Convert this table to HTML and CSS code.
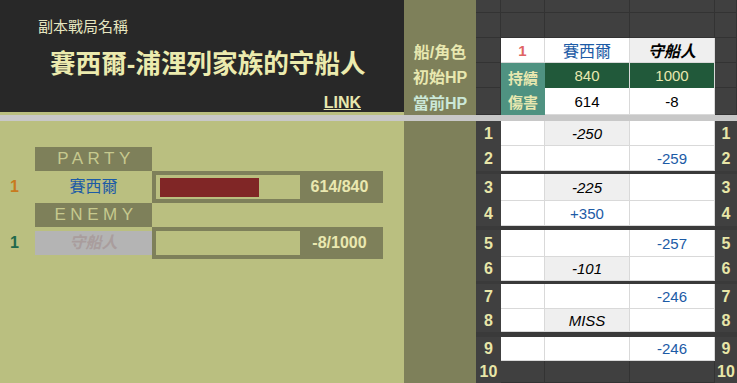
FILE: index.html
```html
<!DOCTYPE html>
<html>
	<head>
		<meta charset="utf-8">
		<title>副本戰局</title>
		<link rel="stylesheet" href="styles.css">
	</head>
	<body>
		<div class="sheet">
			<!-- 標題 -->
			<div class="title-block">
				<div class="caption">副本戰局名稱</div>
				<div class="title">賽西爾-浦浬列家族的守船人</div>
				<a class="link" href="#">LINK</a>
			</div>

			<!-- 角色資料 -->
			<div class="top-board">
				<div class="label"></div><div class="dk"></div><div class="dk"></div><div class="dk"></div><div class="dk"></div><div class="dk"></div>
				<div class="label"></div><div class="dk"></div><div class="dk"></div><div class="dk"></div><div class="dk"></div><div class="dk"></div>
				<div class="label">船/角色</div><div class="dk"></div><div class="wh ship">1</div><div class="wh blue">賽西爾</div><div class="gr foe">守船人</div><div class="dk"></div>
				<div class="label">初始HP</div><div class="dk"></div><div class="dot">持續<br>傷害</div><div class="hp">840</div><div class="hp">1000</div><div class="dk"></div>
				<div class="label cur">當前HP</div><div class="dk"></div><div class="wh">614</div><div class="wh">-8</div><div class="dk"></div>
			</div>

			<div class="freeze"></div>

			<!-- 血條 -->
			<div class="panel">
				<div class="side">PARTY</div>
				<div class="no party">1</div>
				<div class="name">賽西爾</div>
				<div class="bar">
					<div class="track"><div class="fill" style="width:73.1%"></div></div>
					<div class="val">614/840</div>
				</div>
				<div class="side">ENEMY</div>
				<div class="no enemy">1</div>
				<div class="name foe-name">守船人</div>
				<div class="bar">
					<div class="track"><div class="fill" style="width:0%"></div></div>
					<div class="val">-8/1000</div>
				</div>
			</div>

			<!-- 回合紀錄 -->
			<div class="board">
				<div class="olive"></div>
				<div class="num">1</div><div class="wh"></div><div class="gr it">-250</div><div class="wh"></div><div class="num">1</div>
				<div class="num">2</div><div class="wh"></div><div class="wh"></div><div class="wh blue">-259</div><div class="num">2</div>
				<div class="sep"></div>
				<div class="num">3</div><div class="wh"></div><div class="gr it">-225</div><div class="wh"></div><div class="num">3</div>
				<div class="num">4</div><div class="wh"></div><div class="wh blue">+350</div><div class="wh"></div><div class="num">4</div>
				<div class="sep"></div>
				<div class="num">5</div><div class="wh"></div><div class="wh"></div><div class="wh blue">-257</div><div class="num">5</div>
				<div class="num">6</div><div class="wh"></div><div class="gr it">-101</div><div class="wh"></div><div class="num">6</div>
				<div class="sep"></div>
				<div class="num">7</div><div class="wh"></div><div class="wh"></div><div class="wh blue">-246</div><div class="num">7</div>
				<div class="num">8</div><div class="wh"></div><div class="gr it">MISS</div><div class="wh"></div><div class="num">8</div>
				<div class="sep"></div>
				<div class="num">9</div><div class="wh"></div><div class="wh"></div><div class="wh blue">-246</div><div class="num">9</div>
				<div class="num">10</div><div class="dk"></div><div class="dk"></div><div class="dk"></div><div class="num">10</div>
			</div>
		</div>
	</body>
</html>
```

FILE: styles.css
```css
*{
	margin:0;
	padding:0;
	box-sizing:border-box;
}
body{
	width:737px;
	height:383px;
	overflow:hidden;
	background:#404040;
	font-family:"Liberation Sans","Noto Sans CJK TC",sans-serif;
}
.sheet{
	display:grid;
	grid-template-columns:404px 333px;
	grid-template-rows:115px 6px 262px;
}

/* 標題 */
.title-block{
	display:flex;
	flex-direction:column;
	background:#282828;
	border-bottom:3px solid #babf80;
	padding:17px 43px 0 38px;
	color:#e6e6c0;
}
.caption{
	font-size:15px;
	line-height:20px;
}
.title{
	margin-top:12px;
	padding-left:12px;
	font-size:25.6px;
	line-height:30px;
	font-weight:bold;
	white-space:nowrap;
	color:#ecebae;
}
.link{
	align-self:flex-end;
	margin-top:15px;
	font-size:16px;
	line-height:17px;
	font-weight:bold;
	color:#e8e8b0;
}

.freeze{
	grid-column:1 / -1;
	background:#c8c8c8;
}

/* 表格共用 */
.top-board,.board{
	display:grid;
	grid-template-columns:72px 25px 44px 85px 85px 22px;
	font-size:15px;
	text-align:center;
}
.top-board{
	grid-template-rows:13px 25px 25px 25px 27px;
}
.board{
	grid-template-rows:25px 25px 3px 27px 25px 4px 27px 24px 3px 25px 23px 5px 24px 22px;
}
.top-board div,.board div{
	display:flex;
	align-items:center;
	justify-content:center;
}
.label{
	background:#7e805a;
	color:#e8e8b0;
	font-weight:bold;
	font-size:16px;
}
.label.cur{
	color:#cbe8d8;
}
.dk{
	background:#404040;
	border-right:1px solid #333;
	border-bottom:1px solid #333;
}
.wh,.gr{
	background:#fff;
	border-right:1px solid #d9d9d9;
	border-bottom:1px solid #d9d9d9;
	color:#000;
}
.gr{
	background:#efefef;
}
.it{
	font-style:italic;
}
.blue{
	color:#1c5ba6;
}
.top-board .blue{
	font-size:16px;
}
.ship{
	color:#e06464;
	font-weight:bold;
}
.foe{
	font-style:italic;
	font-weight:bold;
	font-size:16px;
}
.top-board .dot{
	grid-row:span 2;
	flex-direction:column;
	padding-top:4px;
	background:#4f9281;
	color:#e8e8b0;
	font-weight:bold;
	font-size:15px;
	line-height:24px;
}
.hp{
	background:#21593a;
	color:#e8e8b0;
	border-right:1px solid #d9d9d9;
}
.olive{
	grid-row:1 / -1;
	background:#7e805a;
}
.num{
	background:#404040;
	color:#e8e6a8;
	font-weight:bold;
	font-size:16px;
}
.sep{
	grid-column:2 / -1;
	background:#3a3a3a;
}

/* 血條 */
.panel{
	display:grid;
	grid-template-columns:35px 117px 231px;
	grid-template-rows:24px 32px 24px 32px;
	align-content:start;
	padding-top:26px;
	background:#babf80;
}
.side{
	grid-column:2;
	background:#7e805a;
	color:#c6c98e;
	font-size:17px;
	line-height:24px;
	letter-spacing:4.5px;
	text-align:center;
	padding-left:5px;
}
.no{
	grid-column:1;
	font-size:16px;
	font-weight:bold;
	line-height:32px;
	padding-left:10px;
}
.party{
	color:#c87a1e;
}
.enemy{
	color:#21684c;
}
.name{
	grid-column:2;
	font-size:16px;
	line-height:32px;
	text-align:center;
	color:#1c5ba6;
}
.foe-name{
	margin:4px 0;
	line-height:24px;
	background:#b4b4b4;
	color:#a99d9d;
	font-style:italic;
	font-weight:bold;
}
.bar{
	grid-column:3;
	display:flex;
	padding:4px;
	background:#7e805a;
}
.track{
	width:144px;
	padding:3px 4px 2px;
	background:#babf80;
}
.fill{
	height:100%;
	background:#802626;
}
.val{
	flex:1;
	text-align:center;
	font-size:16px;
	font-weight:bold;
	line-height:24px;
	color:#eae8b0;
}
```
